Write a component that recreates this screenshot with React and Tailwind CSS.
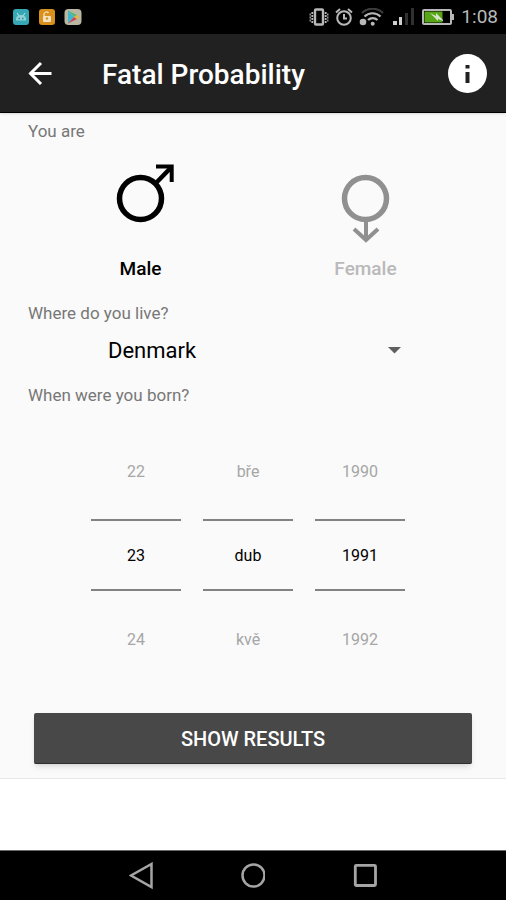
import React, { useState } from 'react';

const DAYS = Array.from({ length: 31 }, (_, i) => String(i + 1));
const MONTHS = ['led', 'úno', 'bře', 'dub', 'kvě', 'čvn', 'čvc', 'srp', 'zář', 'říj', 'lis', 'pro'];
const YEARS = Array.from({ length: 100 }, (_, i) => String(1920 + i));
const COUNTRIES = ['Austria', 'Czech Republic', 'Denmark', 'Finland', 'Germany', 'Norway', 'Sweden'];

const StatusBar = () => (
  <div className="flex h-[34px] items-center justify-between bg-black pl-3 pr-2 text-[#b8b8b8]">
    <div className="flex gap-2">
      <svg className="h-[18px] w-[18px]" viewBox="0 0 18 18">
        <rect x="1" y="1" width="16" height="16" rx="3" fill="#35a7b5" />
        <path d="M4 12.500V11a5 4 0 0 1 10 0v1.500z" fill="#8fd3d8" />
        <path d="M5 5l2 3M13 5l-2 3" stroke="#a3dadd" strokeWidth="1.200" />
        <path d="M6.500 10.500h1.500M10 10.500h1.500" stroke="#268896" strokeWidth="1.500" />
      </svg>
      <svg className="h-[18px] w-[18px]" viewBox="0 0 18 18">
        <rect x="1" y="1" width="16" height="16" rx="3" fill="#d8911c" />
        <path d="M6 8V6.500a2.500 2.500 0 0 1 4.500-1.500" fill="none" stroke="#f1d6a4" strokeWidth="1.500" />
        <rect x="5" y="8" width="8" height="6" rx="1" fill="#f3e3c4" />
        <circle cx="9" cy="10.500" r="1.200" fill="#d8911c" />
      </svg>
      <svg className="h-[18px] w-[18px]" viewBox="0 0 18 18">
        <rect x="0.500" y="1" width="17" height="16" rx="4" fill="#b9b6a2" />
        <path d="M4 2.500L10 9l-6 6.500z" fill="#3fb6cf" />
        <path d="M4 2.500L13 7l-3 2z" fill="#58b87a" />
        <path d="M4 15.500L13 11l-3-2z" fill="#d0455a" />
        <path d="M10 9l3-2 2.500 2L13 11z" fill="#e2b83e" />
      </svg>
    </div>
    <div className="flex items-center gap-1.5">
      <svg className="h-[18px] w-5" viewBox="0 0 20 18" fill="none" stroke="currentColor">
        <rect x="6" y="1.500" width="8" height="15" rx="1" strokeWidth="2.400" />
        <path d="M3.300 4v11M16.700 4v11" strokeWidth="1.800" strokeDasharray="2 1" />
        <path d="M1.200 5.500v8M18.800 5.500v8" strokeWidth="1.200" strokeDasharray="2 1" />
      </svg>
      <svg className="h-[18px] w-[18px]" viewBox="0 0 18 18" fill="none" stroke="currentColor" strokeWidth="2">
        <circle cx="9" cy="10" r="6.800" />
        <path d="M9 6v4.500h3M1 4.500L5 1M17 4.500L13 1" />
      </svg>
      <svg className="h-[18px] w-[26px]" viewBox="0 0 26 18" fill="none" stroke="currentColor" strokeWidth="2.200">
        <path d="M3 5a15 15 0 0 1 21 0" stroke="#3c3c3c" />
        <path d="M5.500 8.500a11.500 11.500 0 0 1 16 0M9 12a7 7 0 0 1 9.500 0" />
        <circle cx="13.700" cy="15.700" r="2" fill="currentColor" stroke="none" />
        <circle cx="4" cy="14" r="3.300" fill="currentColor" stroke="none" />
      </svg>
      <svg className="h-[18px] w-6" viewBox="0 0 24 18">
        <path d="M2 13h4v4H2zM8 9h3v8H8z" fill="#d0d0d0" />
        <path d="M14 5h3v12h-3zM20 0h3v17h-3z" fill="#303030" />
      </svg>
      <svg className="h-[18px] w-[34px]" viewBox="0 0 34 18">
        <rect x="2" y="2" width="28" height="14" rx="1" fill="none" stroke="#b8b8b8" strokeWidth="2" />
        <path d="M31 6h2v6h-2z" fill="#b8b8b8" />
        <path d="M3.500 3.500h18v11h-18z" fill="#58a618" />
        <path d="M9 5l6 3V5l7 7v-2.500V13l-5-2v2z" fill="#d6e5c8" />
      </svg>
      <span className="text-[19px] leading-6">1:08</span>
    </div>
  </div>
);

const GenderOption = ({ value, label, checked, onChange, children }) => (
  <label
    className={`flex flex-1 cursor-pointer flex-col items-center ${checked ? 'text-black' : 'text-[#b9b9b9]'}`}
  >
    <input
      type="radio"
      name="gender"
      value={value}
      checked={checked}
      onChange={() => onChange(value)}
      className="sr-only"
    />
    <svg
      className={`h-[90px] w-20 ${checked ? 'text-black' : 'text-[#909090]'}`}
      viewBox="0 0 80 90"
      fill="none"
      stroke="currentColor"
    >
      {children}
    </svg>
    <span className="mt-2 text-[19px] font-medium leading-6">{label}</span>
  </label>
);

const Picker = ({ label, values, index, onChange }) => {
  const last = values.length - 1;
  const prev = index === 0 ? last : index - 1;
  const next = index === last ? 0 : index + 1;

  return (
    <div role="group" aria-label={label} className="flex w-[90px] flex-col text-center text-[16px]">
      <button type="button" onClick={() => onChange(prev)} className="h-24 pt-0.5 text-[#a6a6a6]">
        {values[prev]}
      </button>
      <div className="flex h-[72px] items-center justify-center border-y-2 border-[#828282] pt-0.5 text-black">
        {values[index]}
      </div>
      <button type="button" onClick={() => onChange(next)} className="h-24 pt-0.5 text-[#a6a6a6]">
        {values[next]}
      </button>
    </div>
  );
};

const NavBar = () => (
  <nav className="flex h-[50px] items-center justify-center gap-[88px] border-t border-[#6a6a6a] bg-black text-[#a5a5a5]">
    <button type="button" aria-label="Back">
      <svg className="h-7 w-6" viewBox="0 0 24 28" fill="none" stroke="currentColor" strokeWidth="2.500">
        <path d="M22.500 2v23L2 13.500z" />
      </svg>
    </button>
    <button type="button" aria-label="Home">
      <svg className="h-7 w-6" viewBox="0 0 24 28" fill="none" stroke="currentColor" strokeWidth="2.500">
        <circle cx="12.500" cy="13.500" r="11" />
      </svg>
    </button>
    <button type="button" aria-label="Recent apps">
      <svg className="h-7 w-6" viewBox="0 0 24 28" fill="none" stroke="currentColor" strokeWidth="2.800">
        <rect x="2.300" y="3.300" width="20.200" height="20.200" rx="1" />
      </svg>
    </button>
  </nav>
);

const App = () => {
  const [gender, setGender] = useState('male');
  const [country, setCountry] = useState('Denmark');
  const [day, setDay] = useState(22);
  const [month, setMonth] = useState(3);
  const [year, setYear] = useState(71);

  return (
    <div className="flex min-h-screen flex-col bg-white font-[Roboto,sans-serif]">
      <StatusBar />

      {/* App bar */}
      <header className="z-10 flex h-[79px] items-center border-b border-black bg-[#212121] pl-7 pr-[19px] text-white shadow">
        <button type="button" aria-label="Back">
          <svg className="h-6 w-6" viewBox="0 0 24 24" fill="none" stroke="currentColor" strokeWidth="3">
            <path d="M23.500 12.500H3M13 2L2.500 12.500 13 23" />
          </svg>
        </button>
        <h1 className="ml-[50px] flex-1 pt-1 text-[28px] font-medium leading-8">Fatal Probability</h1>
        <button type="button" aria-label="Info">
          <svg className="h-[39px] w-[39px]" viewBox="0 0 39 39">
            <circle cx="19.500" cy="19.500" r="19.500" fill="#fff" />
            <path d="M17.500 11h4v3.500h-4zM17.500 18h4v11h-4z" fill="#212121" />
          </svg>
        </button>
      </header>

      <main className="border-b border-[#e8e8e8] bg-[#fafafa] px-7 pb-3.5 pt-1.5">
        <form onSubmit={(e) => e.preventDefault()}>
          <fieldset>
            <legend className="text-[17px] leading-6 text-[#777777]">You are</legend>
            <div className="mt-4 flex">
              <GenderOption value="male" label="Male" checked={gender === 'male'} onChange={setGender}>
                <circle cx="39.500" cy="39.500" r="21" strokeWidth="5.500" />
                <path d="M55 24L70.500 8" strokeWidth="4.500" />
                <path d="M55 7.500h15.700V23" strokeWidth="4" />
              </GenderOption>
              <GenderOption value="female" label="Female" checked={gender === 'female'} onChange={setGender}>
                <circle cx="39.500" cy="39.500" r="21" strokeWidth="5.500" />
                <path d="M40 62v19M28 70l12 11 12-11" strokeWidth="4" />
              </GenderOption>
            </div>
          </fieldset>

          <label htmlFor="country" className="mt-5 block text-[17px] leading-6 text-[#777777]">
            Where do you live?
          </label>
          <div className="relative mx-14">
            <select
              id="country"
              value={country}
              onChange={(e) => setCountry(e.target.value)}
              className="h-[50px] w-full appearance-none bg-transparent pl-6 text-[22px] text-black"
            >
              {COUNTRIES.map((name) => (
                <option key={name} value={name}>{name}</option>
              ))}
            </select>
            <svg className="pointer-events-none absolute right-5 top-[22px] h-[7px] w-[14px]" viewBox="0 0 14 7">
              <path d="M0 0h13L6.500 6.500z" fill="#5f5f5f" />
            </svg>
          </div>

          {/* Date of birth */}
          <fieldset className="mt-2">
            <legend className="text-[17px] leading-6 text-[#777777]">When were you born?</legend>
            <div className="mt-4 flex justify-center gap-[22px] pr-2.5">
              <Picker label="Day" values={DAYS} index={day} onChange={setDay} />
              <Picker label="Month" values={MONTHS} index={month} onChange={setMonth} />
              <Picker label="Year" values={YEARS} index={year} onChange={setYear} />
            </div>
          </fieldset>

          <div className="mt-[26px] px-1.5">
            <button
              type="submit"
              className="h-[51px] w-full rounded-xs border-b border-[#2e2e2e] bg-[#484848] pt-0.5 text-[20px] font-medium text-white shadow-md"
            >
              SHOW RESULTS
            </button>
          </div>
        </form>
      </main>

      <div className="flex-1" />
      <NavBar />
    </div>
  );
};

export default App;
